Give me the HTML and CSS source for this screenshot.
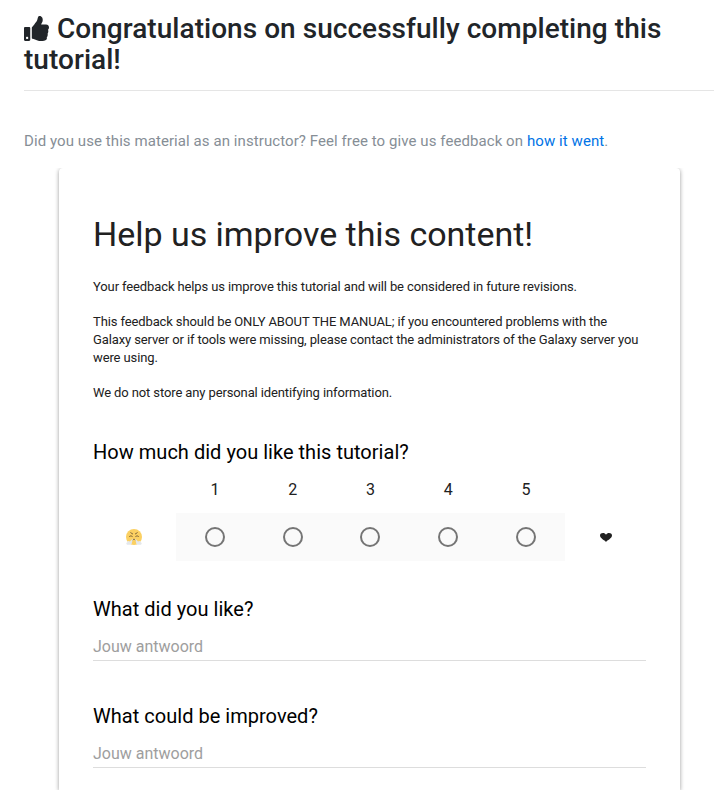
FILE: index.html
```html
<!DOCTYPE html>
<html lang="en">
<head>
<meta charset="utf-8">
<title>Tutorial feedback</title>
<link rel="stylesheet" href="styles.css">
</head>
<body>
<main class="page">
  <h2 class="heading"><svg class="thumb" viewBox="0 0 512 512"><path fill="currentColor" d="M104 224H24c-13.255 0-24 10.745-24 24v240c0 13.255 10.745 24 24 24h80c13.255 0 24-10.745 24-24V248c0-13.255-10.745-24-24-24zM64 472c-13.255 0-24-10.745-24-24s10.745-24 24-24 24 10.745 24 24-10.745 24-24 24zM384 81.452c0 42.416-25.97 66.208-33.277 94.548h101.723c33.397 0 59.397 27.746 59.553 58.098.084 17.938-7.546 37.249-19.439 49.197l-.11.11c9.836 23.337 8.237 56.037-9.308 79.469 8.681 25.895-.069 57.704-16.382 74.757 4.298 17.598 2.244 32.575-6.148 44.632C440.202 511.587 389.616 512 346.839 512l-2.845-.001c-48.287-.017-87.806-17.598-119.56-31.725-15.957-7.099-36.821-15.887-52.651-16.178-6.54-.12-11.783-5.457-11.783-11.998v-213.77c0-3.2 1.282-6.271 3.558-8.521 39.614-39.144 56.648-80.587 89.117-113.111 14.804-14.832 20.188-37.236 25.393-58.902C282.515 39.293 291.817 0 312 0c24 0 72 8 72 81.452z"/></svg> Congratulations on successfully completing this tutorial!</h2>
  <p class="instructor">Did you use this material as an instructor? Feel free to give us feedback on <a href="#">how it went</a>.</p>
  <div class="frame">
  <section class="card">
    <h1 class="title">Help us improve this content!</h1>
    <div class="intro">
      <p>Your feedback helps us improve this tutorial and will be considered in future revisions.</p>
      <p>This feedback should be ONLY ABOUT THE MANUAL; if you encountered problems with the Galaxy server or if tools were missing, please contact the administrators of the Galaxy server you were using.</p>
      <p>We do not store any personal identifying information.</p>
    </div>
    <h3 class="question">How much did you like this tutorial?</h3>
    <div class="scale">
      <span class="end"><svg class="face" viewBox="0 0 16 16"><circle cx="8" cy="8" r="8" fill="#fbd062"/><path d="M4.600 3.200Q5.200 4.800 7 5M11.400 3.200Q10.800 4.800 9 5M3.200 7.600Q5 6 6.600 7.600M12.800 7.600Q11 6 9.400 7.600" fill="none" stroke="#755b35" stroke-width=".9"/><path d="M6.400 11.200Q8 8.800 9.600 11.200" fill="none" stroke="#755b35" stroke-width=".8"/><path fill="#e4e7ea" d="M7 9.600L5.800 14c.2 1-.5 1.800-1.600 1.800H1.600C0 15.600-.1 13.600 1.300 13.200c.3-1.300 2-1.400 2.600-.6zM9 9.600l1.200 4.400c-.2 1 .5 1.800 1.600 1.800h2.600c1.600-.2 1.700-2.200.3-2.600-.3-1.300-2-1.400-2.600-.6z"/></svg></span>
      <label class="choice"><span class="number">1</span><span class="cell"><input type="radio" name="rating"></span></label>
      <label class="choice"><span class="number">2</span><span class="cell"><input type="radio" name="rating"></span></label>
      <label class="choice"><span class="number">3</span><span class="cell"><input type="radio" name="rating"></span></label>
      <label class="choice"><span class="number">4</span><span class="cell"><input type="radio" name="rating"></span></label>
      <label class="choice"><span class="number">5</span><span class="cell"><input type="radio" name="rating"></span></label>
      <span class="end end-right"><svg class="heart" viewBox="0 0 12 9"><path fill="#212121" d="M6 9C4.800 7.200 0 5.600 0 2.600-.1-.3 4.600-.9 6 1.700 7.400-.9 12.100-.3 12 2.600 12 5.600 7.200 7.200 6 9z"/></svg></span>
    </div>
    <h3 class="question">What did you like?</h3>
    <div class="answer">Jouw antwoord</div>
    <h3 class="question">What could be improved?</h3>
    <div class="answer">Jouw antwoord</div>
  </section>
  </div>
</main>
</body>
</html>
```

FILE: styles.css
```css
* { box-sizing: border-box; }
body { margin: 0; background: #fff; color: #212529; font-family: Roboto, sans-serif; }
h1, h2, h3, p { margin: 0; }
.page { padding: 13px 6px 0 24px; }
.heading { height: 78px; border-bottom: 1px solid #e5e5e5; font-size: 28px; line-height: 31px; font-weight: 500; letter-spacing: .04px; }
.thumb { width: 25px; height: 25px; margin-right: 1px; vertical-align: -3px; }
.instructor { margin-top: 39px; font-size: 15px; line-height: 22px; letter-spacing: .077px; color: #868e96; }
.instructor a { color: #0073e6; text-decoration: none; }
.frame { width: 641px; height: 622px; margin: 16px 0 0 25px; padding: 0 10px; overflow: hidden; }
.card { width: 621px; height: 622px; padding: 46px 34px 0; border-radius: 4px 4px 0 0; background: #fff; box-shadow: 0 1px 4px rgba(0, 0, 0, .4); }
.title { font-size: 34px; line-height: 40px; font-weight: 400; letter-spacing: -.03px; color: #212121; }
.intro { margin-top: 24px; font-size: 13px; line-height: 17.7px; letter-spacing: -.116px; color: #212121; }
.intro p { margin-bottom: 17.7px; }
.question { font-size: 20px; line-height: 27px; font-weight: 400; letter-spacing: .025px; color: #000; }
.intro + .question { margin-top: 37px; }
.scale { display: grid; grid-template-columns: 83px repeat(5, 77.8px) 81px; height: 95px; margin: 0 0 35px; }
.choice { display: grid; grid-template-rows: 47px 48px; }
.number, .cell, .end { display: flex; align-items: center; justify-content: center; }
.number { padding-top: 1px; font-size: 16px; color: #212121; }
.cell { background: #fafafa; }
.cell input { appearance: none; width: 20px; height: 20px; margin: 0; border: 2px solid #757575; border-radius: 50%; }
.end { height: 48px; margin-top: 47px; padding-right: 1px; }
.end-right { padding: 1px 0 0 1px; }
.face { width: 16px; height: 16px; }
.heart { width: 12px; height: 9px; }
.answer { height: 38px; margin-bottom: 42px; padding-top: 12px; border-bottom: 1px solid #ddd; font-size: 16px; line-height: 24px; color: #9e9e9e; }
.answer:last-child { margin-bottom: 0; }
```
